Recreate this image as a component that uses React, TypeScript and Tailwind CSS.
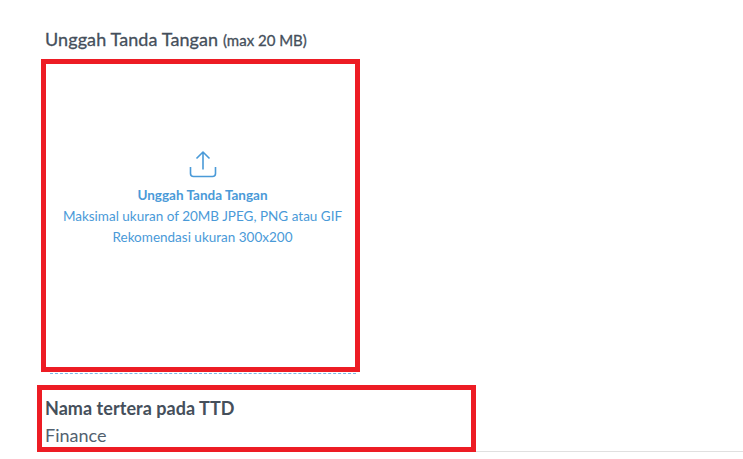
export default function App() {
  return (
    <div className="w-[743px] h-[459px] overflow-hidden bg-white font-['Lato',sans-serif] text-[#454f5b] pt-[28px]">
      <h2 className="ml-[45px] h-[31px] text-[18px] leading-[22px] font-normal whitespace-nowrap tracking-[0.1px] [-webkit-text-stroke:0.3px_#454f5b]">
        Unggah Tanda Tangan <span className="text-[15px] tracking-normal">(max 20 MB)</span>
      </h2>
      <div className="ml-[41px] w-[319px] h-[313px] border-[5px] border-[#ed1c24] flex flex-col items-center pt-[85px] pl-[4px] text-[#4a9ad8] text-[13.5px] leading-[21px]">
        <svg width="30" height="30" viewBox="0 0 30 30" fill="none" stroke="#4a9ad8" strokeWidth="1.6" className="mb-[6px]">
          <path d="M15 20.500V3M8.500 9.500 15 3l6.500 6.500" strokeLinejoin="round" />
          <path d="M2.500 18v6.500a3 3 0 0 0 3 3h19a3 3 0 0 0 3-3V18" />
        </svg>
        <div className="font-bold">Unggah Tanda Tangan</div>
        <div className="whitespace-nowrap">Maksimal ukuran of 20MB JPEG, PNG atau GIF</div>
        <div>Rekomendasi ukuran 300x200</div>
      </div>
      <div className="mt-[1px] ml-[50px] w-[306px] border-t border-dashed border-[#7ab8e6]" />
      <div className="mt-[11px] flex items-end">
        <div className="ml-[37px] w-[439px] h-[67px] border-[5px] border-[#ed1c24] pl-[3px] pt-[5px] shrink-0">
          <div className="text-[18px] leading-[26px] font-bold tracking-[0.05px] text-[#454f5b]">Nama tertera pada TTD</div>
          <div className="text-[18px] leading-[24px] mt-[2px] text-[#52616f]">Finance</div>
        </div>
        <div className="flex-1 border-b border-[#e0e0e0]" />
      </div>
    </div>
  );
}
